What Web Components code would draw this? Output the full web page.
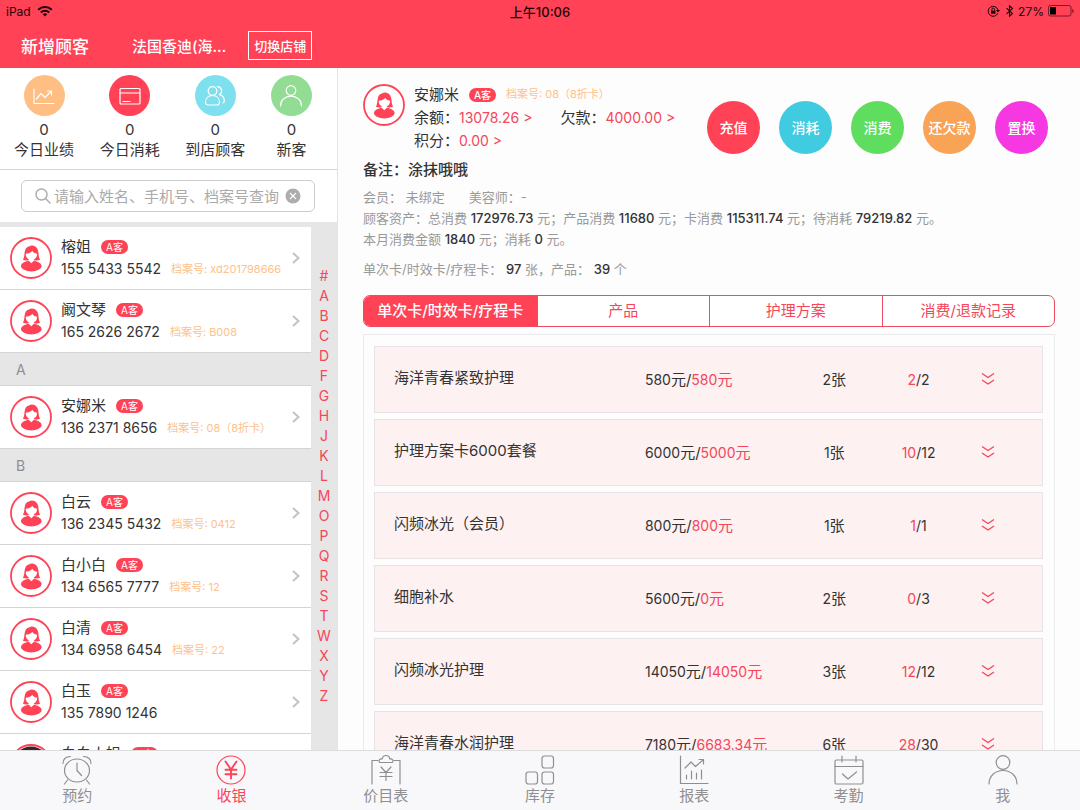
<!DOCTYPE html>
<html lang="zh-CN">
<head>
<meta charset="utf-8">
<meta name="viewport" content="width=device-width, initial-scale=1">
<title>收银</title>
<style>
  :root {
    --brand: #ff4256;
    --ink: #333;
    --muted: #999;
    --peach: #fdc28c;
    --line: #d4d4d6;
    --grey: #e6e6e6;
  }
  html, body { margin: 0; height: 100%; }
  body {
    font-family: Inter, "Noto Sans CJK SC", sans-serif;
    font-size: 15px;
    color: var(--ink);
    overflow: hidden;
  }
</style>
</head>
<body>
<pos-app></pos-app>

<script>
const BASE = `
  *, *::before, *::after { box-sizing: border-box; }
  a { color: inherit; text-decoration: none; }
  button { font: inherit; color: inherit; border: 0; padding: 0; background: none; cursor: pointer; }
  svg { display: block; }
`;

function define(name, render) {
  customElements.define(name, class extends HTMLElement {
    constructor() {
      super();
      this.attachShadow({ mode: 'open' });
    }
    connectedCallback() {
      if (this.shadowRoot.childNodes.length) return;
      const t = document.createElement('template');
      t.innerHTML = `<style>${BASE}</style>` + render(this);
      this.shadowRoot.append(t.content.cloneNode(true));
    }
  });
}

/* ---------- icons ---------- */
const ICONS = {
  trend: '<path d="M2 5v14.500h20"/><path d="M4.500 15l4.500-5.500 4 4 6.500-6.500M15.500 7h4v4"/>',
  card: '<rect x="2" y="4.500" width="20" height="15.500" rx="1"/><path d="M2 9h20M5 17.500h7"/>',
  group: '<circle cx="9.500" cy="7" r="4.300"/><path d="M2.500 18.500c0-4.500 3-7 7-7s7 2.500 7 7c0 1.700-1.200 2.500-3 2.500h-8c-1.800 0-3-.8-3-2.500z"/><path d="M14.500 2.700a4.300 4.300 0 0 1 2 8c3.200.8 4.800 3.300 4.800 6.300 0 1-.6 1.800-1.500 2"/>',
  person: '<circle cx="12" cy="6.500" r="4.800"/><path d="M1.500 22c0-5.800 4.500-9.800 10.500-9.800S22.500 16.200 22.500 22"/>',
  alarm: '<ellipse cx="16" cy="16.500" rx="12.500" ry="11.500"/><path d="M16 9v7.500l4.500 5M6.500 26l-3 4M25.500 26l3 4M2 9.500C2 5 5 2.500 9.500 2.500M30 9.500C30 5 27 2.500 22.500 2.500"/>',
  yen: '<circle cx="16" cy="16" r="14"/><g stroke-width="1.900"><path d="M10.500 7.500l5.500 8 5.500-8M16 15.500v9M10.500 15.800h11M10.500 20.200h11"/></g>',
  price: '<path d="M8 6.500H2V30M24 6.500h6V30"/><path d="M9.500 8.500c-1.500-2 .2-4 2.700-3.500C12.500 2.500 14 1.500 16 1.500s3.500 1 3.800 3.500c2.500-.5 4.200 1.500 2.700 3.500z"/><path d="M11 13l5 5.500 5-5.500M16 18.500v8M10 18.500h12M10 22.500h12"/>',
  stock: '<rect x="18" y="2" width="11.500" height="12" rx="2.500"/><rect x="2" y="18" width="11.500" height="12" rx="2.500"/><rect x="18" y="18" width="11.500" height="12" rx="2.500"/>',
  report: '<path d="M2.500 2v27.500H30"/><path d="M7 14l6-6 4.500 4.500L25 6M21 5.500h4.500V10M8.500 25v-4M13.500 25v-8M18.500 25v-6M23.500 25v-9"/>',
  calendar: '<rect x="2" y="6" width="28" height="24" rx="1.500"/><path d="M2 12.500h28M9 2v6M23 2v6M9.500 20l5.500 5 8.500-7"/>',
  me: '<circle cx="16" cy="8.500" r="6.800"/><path d="M2 30c0-8 6-13.500 14-13.500S30 22 30 30"/>'
};

define('line-icon', el => {
  const box = el.getAttribute('box') || '24';
  return `
  <style>
    :host { display: block; width: 24px; height: 24px; }
    :host([box="32"]) { width: 32px; height: 32px; }
    svg { width: 100%; height: 100%; fill: none; stroke: currentColor; stroke-width: 1.2; stroke-linecap: round; stroke-linejoin: round; }
  </style>
  <svg viewBox="0 0 ${box} ${box}" aria-hidden="true">${ICONS[el.getAttribute('name')]}</svg>`;
});

define('client-avatar', el => `
  <style>
    :host { display: block; flex: none; width: 42px; height: 42px; }
    svg { width: 100%; height: 100%; }
  </style>
  <svg viewBox="0 0 42 42" aria-hidden="true">
    <circle cx="21" cy="21" r="20" fill="#fff" stroke="#ff4256" stroke-width="1.800"/>
    ${el.hasAttribute('photo')
      ? '<circle cx="21" cy="21" r="18.500" fill="#3a2528"/><ellipse cx="21" cy="23" rx="8" ry="10" fill="#f0cdbd"/>'
      : `<path fill="#ff4256" d="M19.500 9.300c.8-.6 1.600-.8 2.500-.7 4.300.2 6 3.200 6.400 6.900.3 3 .5 5.300 1.700 7.300-1.700.8-4 .9-5.600.4h-6c-1.600.5-3.900.4-5.600-.4 1.200-2 1.400-4.300 1.700-7.300.4-3.300 1.800-5.600 4.900-6.200z"/>
         <ellipse cx="21.300" cy="29" rx="10.400" ry="5.400" fill="#ff4256"/>
         <path fill="#fff" d="M18.700 20.500h5.200v3.300l-2.600 2.400-2.600-2.400z"/>
         <path fill="#fff" d="M16.200 16.600c2.700-.1 4.900-1 6.100-2.900.9 1.700 2.300 2.700 4.300 2.900l.5 1.200c-.3 3-2.700 5.200-5.700 5.200s-5.400-2.200-5.700-5.200z"/>`}
  </svg>`);

define('level-badge', () => `
  <style>
    :host {
      display: inline-flex; flex: none; align-items: center; justify-content: center;
      width: 27px; height: 14px; border-radius: 7px;
      background: var(--brand); color: #fff; font-size: 10px; line-height: 14px;
    }
  </style><slot></slot>`);

/* ---------- top bars ---------- */
define('status-bar', () => `
  <style>
    :host {
      display: grid; grid-template-columns: 1fr auto 1fr; align-items: center; height: 22px; padding: 0 6px;
      background: var(--brand); color: #1c0508; font-size: 12px;
    }
    .side { display: flex; align-items: center; gap: 6px; }
    .right { justify-content: flex-end; gap: 4px; }
    .time { font-size: 13px; font-weight: 500; }
  </style>
  <div class="side">iPad
    <svg width="16" height="12" viewBox="0 0 16 12" fill="none" stroke="currentColor" stroke-width="2"><path d="M1.200 4.800a9.800 9.800 0 0 1 13.600 0M3.800 7.500a6 6 0 0 1 8.400 0"/><path d="M8 11.500L5.800 9.300a3.100 3.100 0 0 1 4.400 0z" fill="currentColor" stroke="none"/></svg>
  </div>
  <div class="time">上午10:06</div>
  <div class="side right">
    <svg width="14" height="12" viewBox="0 0 14 12" fill="none" stroke="currentColor"><path d="M10.800 8.200A5 5 0 1 1 11 5"/><path d="M9 5h4l-2 2.500z" fill="currentColor" stroke="none"/><rect x="4" y="5.500" width="4.500" height="3.200" fill="currentColor" stroke="none"/><path d="M4.900 5.500V4.300a1.300 1.300 0 0 1 2.600 0v1.200"/></svg>
    <svg width="9" height="12" viewBox="0 0 9 12" fill="none" stroke="currentColor" stroke-width="1.100"><path d="M1.500 3.200l6 5.300-3 2.700V.8l3 2.700-6 5.300"/></svg>
    <span>27%</span>
    <svg width="26" height="12" viewBox="0 0 26 12"><rect x=".5" y=".5" width="22.500" height="10.500" rx="2" fill="none" stroke="currentColor" stroke-opacity=".6"/><rect x="2" y="2" width="6" height="7.500" fill="#000"/><path d="M24.200 4v4c1.100-.4 1.400-1.200 1.400-2s-.3-1.600-1.400-2z" fill="currentColor" fill-opacity=".6"/></svg>
  </div>`);

define('app-header', () => `
  <style>
    :host { display: flex; align-items: center; height: 46px; padding: 0 21px; background: var(--brand); color: #fff; font-weight: 500; }
    .add { font-size: 17px; margin-right: 43px; }
    .shop { margin-right: 22px; }
    .switch { height: 29px; padding: 0 5px; border: 1px solid #fff; font-size: 13px; }
  </style>
  <button class="add" type="button">新增顾客</button>
  <span class="shop">法国香迪(海...</span>
  <button class="switch" type="button">切换店铺</button>`);

/* ---------- left column ---------- */
define('stat-item', el => `
  <style>
    :host { display: flex; flex-direction: column; align-items: center; line-height: 20px; }
    .dot { display: grid; place-items: center; width: 41px; height: 41px; border-radius: 50%; margin-bottom: 4px; background: ${el.getAttribute('tint')}; color: #fff; }
  </style>
  <div class="dot"><line-icon name="${el.getAttribute('icon')}"></line-icon></div>
  <span>0</span><span><slot></slot></span>`);

define('search-box', () => `
  <style>
    :host { display: block; padding: 10px 22px 10px 21px; background: #fff; }
    label {
      display: flex; align-items: center; height: 32px; padding: 0 13px; gap: 3px;
      border: 1px solid #ccc; border-radius: 6px; color: #aaa;
    }
    input { flex: 1; min-width: 0; border: 0; outline: 0; padding: 0; background: none; font: inherit; color: var(--ink); }
    input::placeholder { color: #aaa; opacity: 1; }
    svg, button { flex: none; }
  </style>
  <label>
    <svg width="16" height="16" viewBox="0 0 16 16" fill="none" stroke="currentColor" stroke-width="1.400" stroke-linecap="round"><circle cx="6.500" cy="6.500" r="5.500"/><path d="M10.500 10.500l4.500 4.500"/></svg>
    <input type="text" aria-label="搜索顾客" placeholder="请输入姓名、手机号、档案号查询">
    <button type="button" aria-label="清除"><svg width="16" height="16" viewBox="0 0 16 16"><circle cx="8" cy="8" r="7.500" fill="#adadad"/><path d="M5 5l6 6M11 5l-6 6" stroke="#fff" stroke-width="1.100"/></svg></button>
  </label>`);

define('customer-row', el => {
  const file = el.getAttribute('file');
  return `
  <style>
    :host { display: block; }
    a { display: flex; align-items: center; gap: 9px; height: 63px; padding: 0 11px 0 10px; background: #fff; border-bottom: 1px solid var(--line); }
    .text { flex: 1; line-height: 22px; min-width: 0; white-space: nowrap; }
    .line { display: flex; align-items: center; gap: 10px; }
    .phone { font-size: 14px; }
    .file { font-size: 11px; color: var(--peach); }
    .chevron { fill: none; stroke: #c3c3c7; stroke-width: 2; }
  </style>
  <a href="#customer">
    <client-avatar ${el.hasAttribute('photo') ? 'photo' : ''}></client-avatar>
    <div class="text">
      <div class="line"><span><slot></slot></span><level-badge>A客</level-badge></div>
      <div class="line"><span class="phone">${el.getAttribute('phone')}</span>${file ? `<span class="file">档案号: ${file}</span>` : ''}</div>
    </div>
    <svg class="chevron" width="8" height="12" viewBox="0 0 8 12" aria-hidden="true"><path d="M1 1l5.500 5L1 11"/></svg>
  </a>`;
});

define('group-label', () => `
  <style>
    :host { display: flex; align-items: center; height: 33px; padding: 0 16px; font-size: 14px; color: #8e8e93; background: var(--grey); border-bottom: 1px solid var(--line); }
  </style><slot></slot>`);

define('letter-index', () => `
  <style>
    :host { display: flex; flex-direction: column; justify-content: center; width: 26px; background: var(--grey); font-size: 14px; line-height: 20px; color: #f5465a; text-align: center; }
  </style>
  ${[...'#ABCDFGHJKLMOPQRSTWXYZ'].map(c => `<a href="#${c === '#' ? 'top' : c}">${c}</a>`).join('')}`);

define('customer-pane', () => `
  <style>
    :host { display: flex; flex-direction: column; min-height: 0; border-right: 1px solid #e4e4e6; background: #fff; }
    .stats { display: flex; justify-content: space-between; padding: 7px 25px 9px 14px; border-bottom: 1px solid var(--line); }
    .body { flex: 1; display: flex; min-height: 0; background: var(--grey); }
    .list { flex: 1; min-width: 0; overflow-y: auto; scrollbar-width: none; padding-top: 5px; }
  </style>
  <div class="stats">
    <stat-item icon="trend" tint="#ffbf84">今日业绩</stat-item>
    <stat-item icon="card" tint="#ff4256">今日消耗</stat-item>
    <stat-item icon="group" tint="#7edfef">到店顾客</stat-item>
    <stat-item icon="person" tint="#92dc93">新客</stat-item>
  </div>
  <search-box></search-box>
  <div class="body">
    <div class="list">
      <customer-row phone="155 5433 5542" file="xd201798666">榕姐</customer-row>
      <customer-row phone="165 2626 2672" file="B008">阚文琴</customer-row>
      <group-label>A</group-label>
      <customer-row phone="136 2371 8656" file="08（8折卡）">安娜米</customer-row>
      <group-label>B</group-label>
      <customer-row phone="136 2345 5432" file="0412">白云</customer-row>
      <customer-row phone="134 6565 7777" file="12">白小白</customer-row>
      <customer-row phone="134 6958 6454" file="22">白清</customer-row>
      <customer-row phone="135 7890 1246">白玉</customer-row>
      <customer-row photo phone="135 7890 1250">白白小姐</customer-row>
    </div>
    <letter-index></letter-index>
  </div>`);

/* ---------- right column ---------- */
define('round-action', el => `
  <style>
    :host { display: block; }
    button { width: 53px; height: 53px; border-radius: 50%; background: ${el.getAttribute('tint')}; color: #fff; font-size: 14px; font-weight: 500; line-height: 53px; white-space: nowrap; }
  </style><button type="button"><slot></slot></button>`);

define('customer-profile', () => `
  <style>
    :host { display: block; padding-top: 15px; }
    .top { display: flex; align-items: flex-start; }
    client-avatar { margin: 1px 9px 0 0; }
    .info { line-height: 23px; white-space: nowrap; }
    .line { display: flex; align-items: center; gap: 10px; }
    .money { gap: 28px; }
    .money a { font-size: 14px; color: #f5465a; }
    .file { font-size: 11px; color: var(--peach); }
    level-badge { font-weight: 500; }
    .actions { display: flex; gap: 19px; margin: 18px 7px 0 auto; }
    p { margin: 0; }
    .remark { margin-top: 4px; line-height: 23px; font-weight: 500; }
    .meta { margin-top: 6px; font-size: 13px; line-height: 21px; color: var(--muted); }
    .meta b { font-weight: 500; color: var(--ink); }
    .meta .who { display: flex; gap: 24px; }
    .counts { margin-top: 9px; }
  </style>
  <div class="top">
    <client-avatar></client-avatar>
    <div class="info">
      <div class="line"><span>安娜米</span><level-badge>A客</level-badge><span class="file">档案号: 08（8折卡）</span></div>
      <div class="line money"><span>余额：<a href="#balance">13078.26 &gt;</a></span><span>欠款：<a href="#debt">4000.00 &gt;</a></span></div>
      <div class="line money"><span>积分：<a href="#points">0.00 &gt;</a></span></div>
    </div>
    <div class="actions">
      <round-action tint="#ff4256">充值</round-action>
      <round-action tint="#41cbe0">消耗</round-action>
      <round-action tint="#5edd5e">消费</round-action>
      <round-action tint="#f8a356">还欠款</round-action>
      <round-action tint="#f638e2">置换</round-action>
    </div>
  </div>
  <p class="remark">备注：涂抹哦哦</p>
  <div class="meta">
    <p class="who"><span>会员： 未绑定</span><span>美容师：-</span></p>
    <p>顾客资产：总消费 <b>172976.73</b> 元；产品消费 <b>11680</b> 元；卡消费 <b>115311.74</b> 元；待消耗 <b>79219.82</b> 元。</p>
    <p>本月消费金额 <b>1840</b> 元；消耗 <b>0</b> 元。</p>
    <p class="counts">单次卡/时效卡/疗程卡： <b>97</b> 张，产品： <b>39</b> 个</p>
  </div>`);

define('segment-tabs', () => `
  <style>
    :host { display: grid; grid-template-columns: repeat(4, 1fr); height: 32px; margin-top: 15px; border: 1px solid #ee4a60; border-radius: 7px; overflow: hidden; background: #fff; }
    button { color: #f5465a; line-height: 30px; }
    button + button { border-left: 1px solid #ee4a60; }
    button[aria-selected="true"] { background: var(--brand); color: #fff; font-weight: 500; }
  </style>
  <button type="button" role="tab" aria-selected="true">单次卡/时效卡/疗程卡</button>
  <button type="button" role="tab" aria-selected="false">产品</button>
  <button type="button" role="tab" aria-selected="false">护理方案</button>
  <button type="button" role="tab" aria-selected="false">消费/退款记录</button>`);

const CARDS = [
  ['海洋青春紧致护理', '580', '580', 2, 2, 2],
  ['护理方案卡6000套餐', '6000', '5000', 1, 10, 12],
  ['闪频冰光（会员）', '800', '800', 1, 1, 1],
  ['细胞补水', '5600', '0', 2, 0, 3],
  ['闪频冰光护理', '14050', '14050', 3, 12, 12],
  ['海洋青春水润护理', '7180', '6683.34', 6, 28, 30]
];

define('card-table', () => `
  <style>
    :host { display: block; margin-top: 7px; padding: 5px 11px 5px 10px; border: 1px solid #e9ebed; }
    table { width: 100%; table-layout: fixed; border-collapse: separate; border-spacing: 0 6px; line-height: 22px; }
    td { height: 67px; padding: 0; background: #fdf1f1; border: solid #e6e2e5; border-width: 1px 0; text-align: center; white-space: nowrap; }
    .name { width: 40.5%; padding: 0 0 4px 19px; border-left-width: 1px; text-align: left; }
    .price { width: 22%; text-align: left; }
    .count, .used { width: 12.6%; }
    .more { padding: 0 27px 3px 0; border-right-width: 1px; }
    .n { font-size: 14px; }
    .hot { color: #f5465a; }
    button { display: inline-block; vertical-align: middle; }
  </style>
  <table>
    <tbody>
      ${CARDS.map(([name, list, paid, qty, left, all]) => `
      <tr>
        <td class="name">${name}</td>
        <td class="price"><span class="n">${list}</span>元/<span class="hot"><span class="n">${paid}</span>元</span></td>
        <td class="count"><span class="n">${qty}</span>张</td>
        <td class="used"><span class="n"><span class="hot">${left}</span>/${all}</span></td>
        <td class="more"><button type="button" aria-label="展开"><svg width="14" height="14" viewBox="0 0 14 14" fill="none" stroke="#f5465a" stroke-width="1.300"><path d="M1 1.500l6 4 6-4M1 8l6 4L13 8"/></svg></button></td>
      </tr>`).join('')}
    </tbody>
  </table>`);

/* ---------- bottom navigation ---------- */
define('nav-item', el => `
  <style>
    :host { display: block; color: #8f8f92; }
    :host([active]) { color: var(--brand); }
    a { display: flex; flex-direction: column; align-items: center; padding-top: 3px; line-height: 20px; }
  </style>
  <a href="#nav"><line-icon box="32" name="${el.getAttribute('icon')}"></line-icon><slot></slot></a>`);

define('pos-app', () => `
  <style>
    :host { display: flex; flex-direction: column; height: 100vh; }
    .columns { flex: 1; display: grid; grid-template-columns: 338px minmax(0, 1fr); min-height: 0; }
    main { padding: 0 25px; background: #fdfdfd; overflow-y: auto; scrollbar-width: none; }
    nav { display: grid; grid-template-columns: repeat(7, 1fr); height: 60px; background: #f8f8fa; border-top: 1px solid #dcdcde; }
  </style>
  <status-bar></status-bar>
  <app-header></app-header>
  <div class="columns">
    <customer-pane></customer-pane>
    <main>
      <customer-profile></customer-profile>
      <segment-tabs role="tablist"></segment-tabs>
      <card-table></card-table>
    </main>
  </div>
  <nav>
    <nav-item icon="alarm">预约</nav-item>
    <nav-item icon="yen" active>收银</nav-item>
    <nav-item icon="price">价目表</nav-item>
    <nav-item icon="stock">库存</nav-item>
    <nav-item icon="report">报表</nav-item>
    <nav-item icon="calendar">考勤</nav-item>
    <nav-item icon="me">我</nav-item>
  </nav>`);
</script>
</body>
</html>
